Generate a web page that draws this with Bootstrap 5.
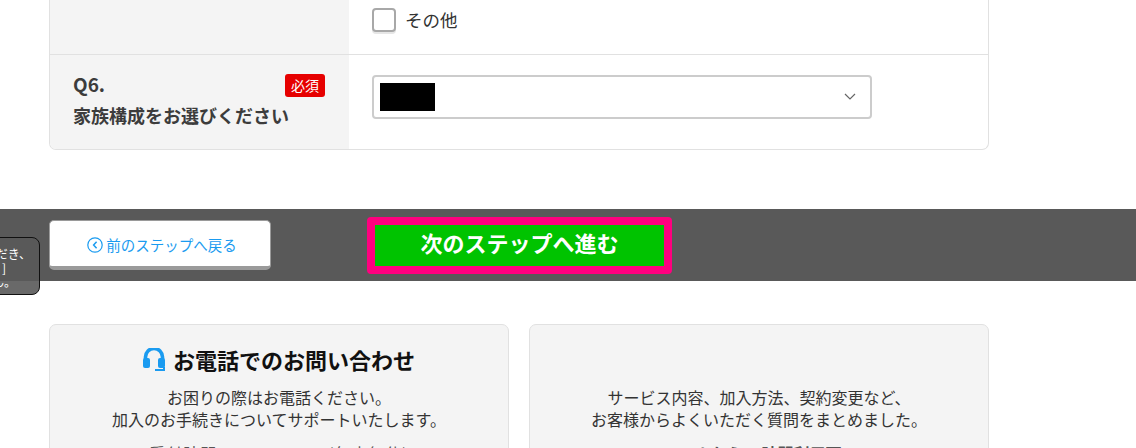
<!DOCTYPE html>
<html lang="ja">
<head>
<meta charset="utf-8">
<title>Step</title>
<link rel="stylesheet" href="https://cdn.jsdelivr.net/npm/bootstrap@5.3.0/dist/css/bootstrap.min.css">
<style>
html,body{height:448px;overflow:hidden}
body{font-family:"Noto Sans CJK JP","Noto Sans",sans-serif;color:#333;font-size:16px;background:#fff;position:relative}
.formbox{margin:-1px 0 0 49px;width:940px;height:151px;border:1px solid #e1e1e1;border-top:0;border-radius:0 0 7px 7px;overflow:hidden}
.qrow{display:flex}
.qrow1{height:56px;border-bottom:1px solid #e1e1e1}
.qrow2{height:94px}
.qhead{width:299px;background:#f4f4f4;flex:none;padding:15px 23px;position:relative}
.qbody{padding-left:23px;flex:1}
.qbody1{display:flex;align-items:flex-start;gap:9px;padding-top:9px}
.chk{width:24px;height:24px;border:2px solid #a8a8a8;border-radius:4px;background:#fff;box-shadow:0 2px 0 #e6e6e6;flex:none}
.chklabel{font-size:17.5px;color:#333;line-height:24px}
.qno{font-size:19px;font-weight:700;line-height:20px;color:#3c3c3c;margin-top:4px}
.qtxt{font-size:18px;font-weight:700;line-height:24px;margin-top:9px;color:#3c3c3c}
.reqtag{position:absolute;right:24px;top:19px;background:#e60000;color:#fff;font-size:14px;line-height:22px;height:23px;width:40px;text-align:center;border-radius:3px}
.selbox{width:500px;height:44px;border:2px solid #ccc;border-radius:4px;margin-top:20px;padding:5px 6px;display:flex;align-items:center;justify-content:space-between;background:#fff}
.masked{width:55px;height:28px;background:#000;display:block}
.chev{margin-right:8px}
.stepbar{margin-top:59px;height:72px;background:#595959;padding:11px 0 0 49px;display:flex;align-items:flex-start}
.backbtn{width:222px;height:50px;background:#fff;border:1px solid #9a9a9a;border-bottom:4px solid #9a9a9a;border-radius:5px;color:#1a9bf0;font-size:14.5px;display:flex;align-items:center;justify-content:center;gap:3px;text-decoration:none;padding:2px 0 0 4px}
.backbtn:hover{background:#fff;color:#1a9bf0;border-color:#9a9a9a}
.nextbtn{margin:-3px 0 0 96px;width:305px;height:57px;background:#00c300;border:8px solid #ff007f;border-radius:4px;color:#fff;font-size:22px;font-weight:700;display:flex;align-items:center;justify-content:center;text-decoration:none;padding:0 0 7px}
.nextbtn:hover{background:#00c300;color:#fff;border-color:#ff007f}
.tipbox{position:absolute;left:-10px;top:237px;width:50px;height:58px;background:rgba(89,89,89,.9);border:1px solid #111;border-radius:8px;color:#fff;font-size:12px;line-height:14px;text-align:right;padding:9px 0 0;overflow:hidden;white-space:nowrap}
.tipbox span{display:block}
.tipline1{margin-right:8px}
.tipline2{margin-right:33px}
.tipline3{margin-right:23px}
.infowrap{margin:43px 0 0 49px;width:940px;display:flex;gap:20px}
.infocard{width:460px;height:200px;background:#f4f4f4;border:1px solid #e1e1e1;border-radius:7px;text-align:center;flex:none}
.infohead{font-size:22px;font-weight:700;color:#111;line-height:30px;margin-top:19px;display:flex;align-items:center;justify-content:center;gap:8px}
.infotext{font-size:16px;line-height:22px;color:#333;margin-top:12px}
.infotext2{margin-top:61px}
.infosub{font-size:16px;line-height:22px;margin-top:12px;color:#555}
.infosub1{letter-spacing:.95px}
</style>
</head>
<body>
<div class="formbox">
  <div class="qrow qrow1">
    <div class="qhead"></div>
    <div class="qbody qbody1">
      <span class="chk"></span><span class="chklabel">その他</span>
    </div>
  </div>
  <div class="qrow qrow2">
    <div class="qhead">
      <div class="qno">Q6.</div>
      <div class="qtxt">家族構成をお選びください</div>
      <span class="reqtag">必須</span>
    </div>
    <div class="qbody">
      <div class="selbox"><span class="masked"></span>
        <svg class="chev" width="12" height="8" viewBox="0 0 12 8" fill="none" stroke="#666" stroke-width="1.2"><path d="M1 1l5 5 5-5"/></svg>
      </div>
    </div>
  </div>
</div>
<div class="stepbar">
  <a class="backbtn btn" href="#">
    <svg width="16" height="16" viewBox="0 0 16 16" fill="none" stroke="#1a9bf0" stroke-width="1.2"><circle cx="8" cy="8" r="7.2"/><path d="M9.6 4.8L6.6 8l3 3.2" stroke-width="1.5"/></svg>
    前のステップへ戻る
  </a>
  <a class="nextbtn btn" href="#">次のステップへ進む</a>
</div>
<div class="tipbox"><span class="tipline1">だき、</span><span class="tipline2">]</span><span class="tipline3">ん。</span></div>
<div class="infowrap">
  <div class="infocard">
    <div class="infohead">
      <svg width="22" height="23" viewBox="0 0 22 23"><path d="M2.5 11V9a8.5 8.5 0 0 1 17 0v2" fill="none" stroke="#1a9bf0" stroke-width="3.6"/><rect x="0" y="10" width="7" height="10" rx="2" fill="#1a9bf0"/><rect x="15" y="10" width="7" height="10" rx="2" fill="#1a9bf0"/><path d="M21 19v3h-9" fill="none" stroke="#1a9bf0" stroke-width="2"/></svg>
      <span>お電話でのお問い合わせ</span>
    </div>
    <div class="infotext">お困りの際はお電話ください。<br>加入のお手続きについてサポートいたします。</div>
    <div class="infosub infosub1">受付時間 10:00～20:00(年中無休)</div>
  </div>
  <div class="infocard">
    <div class="infotext infotext2">サービス内容、加入方法、契約変更など、<br>お客様からよくいただく質問をまとめました。</div>
    <div class="infosub fw-bold">Webから24時間利用可</div>
  </div>
</div>
<script src="https://cdn.jsdelivr.net/npm/bootstrap@5.3.0/dist/js/bootstrap.bundle.min.js"></script>
</body>
</html>
